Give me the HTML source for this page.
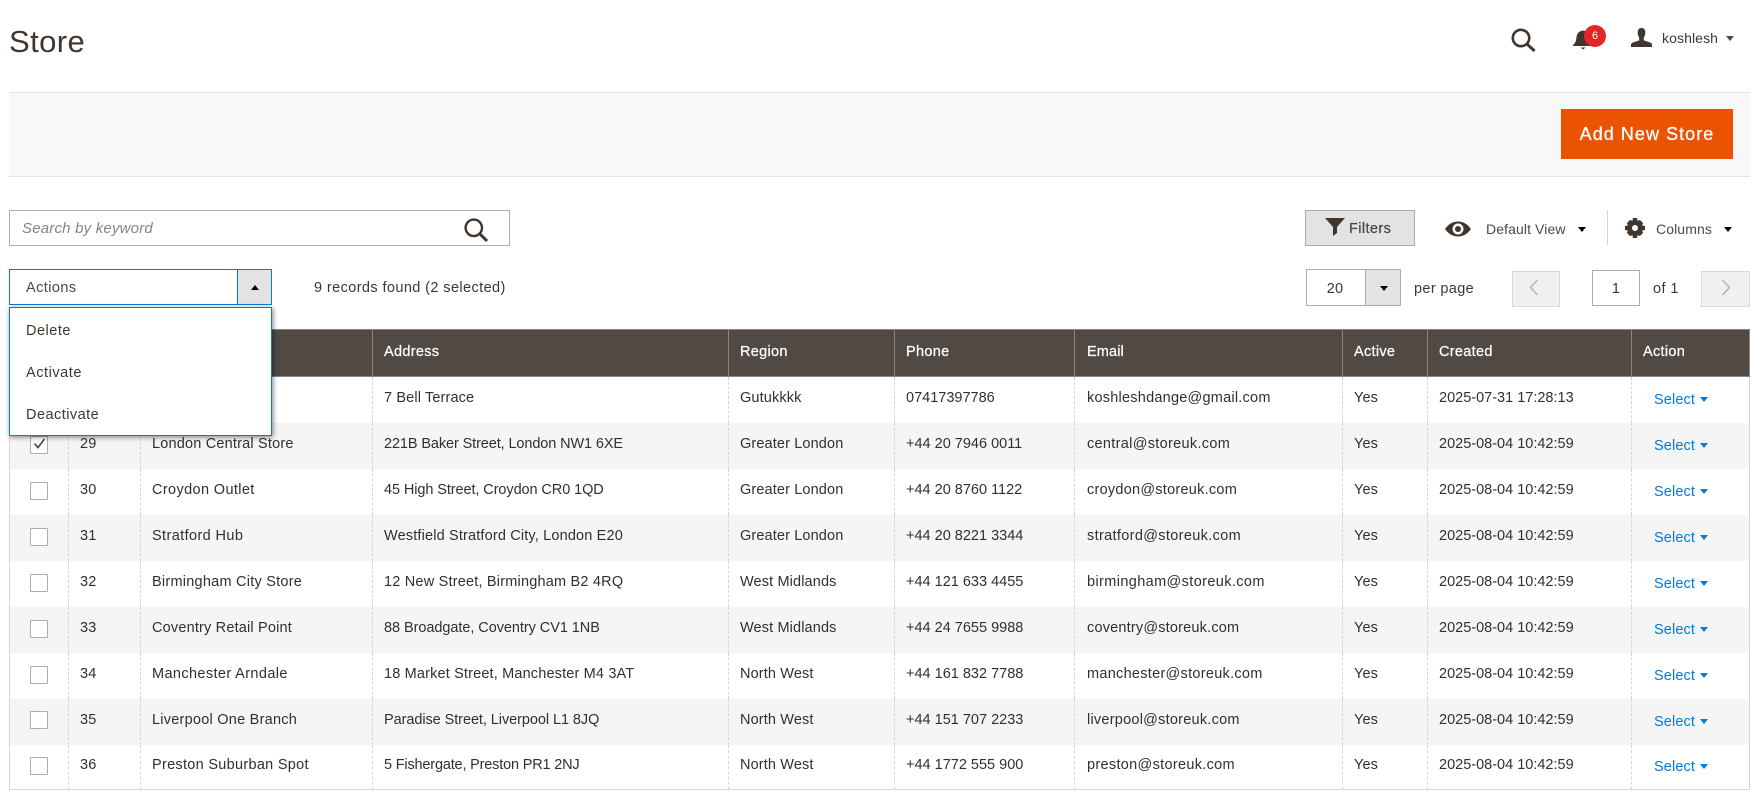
<!DOCTYPE html>
<html><head><meta charset="utf-8"><title>Store</title>
<style>
*{box-sizing:border-box}
html,body{margin:0;padding:0;width:1764px;height:810px;overflow:hidden;background:#fff}
body{font-family:"Liberation Sans",sans-serif;font-size:14.5px;letter-spacing:.13px;color:#303030;position:relative}
.a{position:absolute}
.t{position:absolute;line-height:20px;height:20px;white-space:nowrap}
.d{color:#514943}
.tri{position:absolute;width:0;height:0;border-left:4px solid transparent;border-right:4px solid transparent;border-top:5px solid #41362f}
.triu{position:absolute;width:0;height:0;border-left:4px solid transparent;border-right:4px solid transparent;border-bottom:5px solid #000}
table{position:absolute;left:9px;top:329px;width:1741px;table-layout:fixed;border-collapse:separate;border-spacing:0}
th{height:48px;background:#514943;color:#fff;text-align:left;font-weight:400;letter-spacing:.3px;padding:0 11px 2px;border-right:1px solid #8a837f;border-top:1px solid #8a837f;border-bottom:1px solid #8a837f;-webkit-text-stroke:.25px #fff}
th:first-child{border-left:1px solid #8a837f}
td{height:46px;padding:0 11px 4px;border-right:1px dashed #d6d6d6;white-space:nowrap;overflow:hidden}
td:first-child{border-left:1px solid #d6d6d6}
td:nth-child(3){letter-spacing:.27px}
td:nth-child(6),td:nth-child(9){letter-spacing:0}
td:nth-child(7),th:nth-child(7){padding-left:12px;letter-spacing:.27px}
th:nth-child(7){letter-spacing:.13px}
td:last-child{border-right:1px solid #d6d6d6;padding:0 0 0 22px;color:#007bdb;overflow:visible}
tr:nth-child(even) td{background:#f5f5f5}
tr:last-child td{border-bottom:1px solid #d6d6d6;height:45px}
td i{display:inline-block;width:0;height:0;border-left:4px solid transparent;border-right:4px solid transparent;border-top:5px solid #007bdb;margin-left:5px;vertical-align:2px}
.cb{position:absolute;width:18px;height:18px;left:30px;border:1px solid #adadad;background:#fff;border-radius:1px}
</style></head>
<body>
<div class="t" style="left:9px;top:22px;height:40px;line-height:40px;font-size:31px;letter-spacing:.4px;color:#41362f">Store</div>

<svg class="a" style="left:1511px;top:28px" width="25" height="24" viewBox="0 0 25 24"><circle cx="10" cy="10" r="8.2" fill="none" stroke="#41362f" stroke-width="2.6"/><path d="M15.8 15.8L23.5 23" stroke="#41362f" stroke-width="3" fill="none"/></svg>
<svg class="a" style="left:1572px;top:29px" width="22" height="21" viewBox="0 0 22 21"><path d="M1 16C4 14 4 11 4.500 8C5 4.500 7 2 11 1.500C15 2 17 4.500 17.500 8C18 11 18 14 21 16V17H1Z" fill="#41362f"/><path d="M8.500 18.500H13.500L11 20.500Z" fill="#41362f"/></svg>
<div class="a" style="left:1584px;top:25px;width:22px;height:22px;border-radius:50%;background:#e22626"></div>
<div class="t" style="left:1584px;top:26px;width:22px;text-align:center;color:#fff;font-size:11px;letter-spacing:0">6</div>
<svg class="a" style="left:1631px;top:28px" width="21" height="19" viewBox="0 0 21 19"><path d="M10.500 0C13.500 0 14.500 2.500 14.300 5C14.200 7 13.500 8.500 12.800 9.800V12.200C14.500 13.500 19.500 13.500 21 16V19H0V16C1.500 13.500 6.500 13.500 8.200 12.200V9.800C7.500 8.500 6.800 7 6.700 5C6.500 2.500 7.500 0 10.500 0Z" fill="#41362f"/></svg>
<div class="t d" style="left:1662px;top:28px;font-size:14px;letter-spacing:.1px;color:#41362f">koshlesh</div>
<div class="tri" style="left:1726px;top:36px;border-top-color:#514943"></div>

<div class="a" style="left:9px;top:92px;width:1741px;height:85px;background:#f8f8f8;border-top:1px solid #e3e3e3;border-bottom:1px solid #e3e3e3"></div>
<div class="a" style="left:1561px;top:109px;width:172px;height:50px;background:#eb5202"></div>
<div class="t" style="left:1561px;top:124px;width:172px;text-align:center;color:#fff;font-size:18px;letter-spacing:1.05px;-webkit-text-stroke:.3px #fff">Add New Store</div>

<div class="a" style="left:9px;top:210px;width:501px;height:36px;border:1px solid #adadad;background:#fff"></div>
<div class="t" style="left:22px;top:219px;font-size:15px;letter-spacing:.2px;font-style:italic;color:#858585">Search by keyword</div>
<svg class="a" style="left:464px;top:218px" width="24" height="24" viewBox="0 0 24 24"><circle cx="9.800" cy="9.800" r="8.200" fill="none" stroke="#41362f" stroke-width="2.400"/><path d="M15.500 15.500L23 23" stroke="#41362f" stroke-width="3" fill="none"/></svg>

<div class="a" style="left:1305px;top:210px;width:110px;height:36px;background:#e3e3e3;border:1px solid #adadad"></div>
<svg class="a" style="left:1325px;top:218px" width="20" height="18" viewBox="0 0 20 18"><path d="M0 0H20L12 9V15L8 18V9Z" fill="#41362f"/></svg>
<div class="t" style="left:1349px;top:219px;color:#514943;font-size:14.500px;letter-spacing:.4px;-webkit-text-stroke:.25px #514943">Filters</div>
<svg class="a" style="left:1445px;top:221px" width="26" height="16" viewBox="0 0 26 16"><path fill-rule="evenodd" d="M0 8C3.500 3 8 0.500 13 0.500S22.500 3 26 8C22.500 13 18 15.500 13 15.500S3.500 13 0 8ZM13 2.500A5.500 5.500 0 1 0 13 13.500A5.500 5.500 0 1 0 13 2.500Z" fill="#41362f"/><circle cx="13" cy="8" r="3" fill="#41362f"/></svg>
<div class="t" style="left:1486px;top:219px;color:#514943;font-size:14px;letter-spacing:.1px">Default View</div>
<div class="tri" style="left:1578px;top:227px;border-top-color:#000"></div>
<div class="a" style="left:1607px;top:210px;width:1px;height:35px;background:#d6d6d6"></div>
<svg class="a" style="left:1625px;top:218px" width="20" height="20" viewBox="0 0 20 20"><path fill-rule="evenodd" d="M8 0H12L12.600 2.900L14.900 1.900L18.100 5.100L17.100 7.400L20 8V12L17.100 12.600L18.100 14.900L14.900 18.100L12.600 17.100L12 20H8L7.400 17.100L5.100 18.100L1.900 14.900L2.900 12.600L0 12V8L2.900 7.400L1.900 5.100L5.100 1.900L7.400 2.900ZM10 7A3 3 0 1 0 10 13A3 3 0 1 0 10 7Z" fill="#41362f"/></svg>
<div class="t" style="left:1656px;top:219px;color:#514943;font-size:14px;letter-spacing:.1px">Columns</div>
<div class="tri" style="left:1724px;top:227px;border-top-color:#000"></div>

<div class="a" style="left:1306px;top:269px;width:95px;height:37px;border:1px solid #adadad;background:#fff"></div>
<div class="a" style="left:1365px;top:270px;width:35px;height:35px;background:#e3e3e3;border-left:1px solid #adadad"></div>
<div class="t" style="left:1306px;top:279px;width:58px;text-align:center;color:#41362f">20</div>
<div class="tri" style="left:1380px;top:286px;border-top-color:#000"></div>
<div class="t" style="left:1414px;top:279px;color:#41362f;letter-spacing:.35px">per page</div>
<div class="a" style="left:1512px;top:271px;width:48px;height:36px;background:#f0f0f0;border:1px solid #dadada"></div>
<svg class="a" style="left:1529px;top:279px" width="10" height="18" viewBox="0 0 10 18"><path d="M8.500 1L1.500 8.500L8.500 16" fill="none" stroke="#b5b5b5" stroke-width="1.500"/></svg>
<div class="a" style="left:1592px;top:270px;width:48px;height:36px;background:#fff;border:1px solid #adadad"></div>
<div class="t" style="left:1592px;top:279px;width:48px;text-align:center;color:#41362f">1</div>
<div class="t" style="left:1653px;top:279px;color:#41362f;letter-spacing:.4px">of 1</div>
<div class="a" style="left:1701px;top:271px;width:49px;height:36px;background:#f0f0f0;border:1px solid #dadada"></div>
<svg class="a" style="left:1721px;top:279px" width="10" height="18" viewBox="0 0 10 18"><path d="M1.500 1L8.500 8.500L1.500 16" fill="none" stroke="#b5b5b5" stroke-width="1.500"/></svg>

<div class="t" style="left:314px;top:278px;color:#41362f;letter-spacing:.4px">9 records found (2 selected)</div>

<table>
<colgroup><col style="width:60px"><col style="width:72px"><col style="width:232px"><col style="width:356px"><col style="width:166px"><col style="width:180px"><col style="width:268px"><col style="width:85px"><col style="width:204px"><col style="width:118px"></colgroup>
<thead><tr><th></th><th></th><th></th><th>Address</th><th>Region</th><th>Phone</th><th>Email</th><th>Active</th><th>Created</th><th>Action</th></tr></thead>
<tbody>
<tr><td></td><td></td><td></td><td>7 Bell Terrace</td><td>Gutukkkk</td><td>07417397786</td><td style="letter-spacing:.23px">koshleshdange@gmail.com</td><td>Yes</td><td>2025-07-31 17:28:13</td><td>Select<i></i></td></tr>
<tr><td></td><td>29</td><td style="letter-spacing:.19px">London Central Store</td><td style="letter-spacing:-.11px">221B Baker Street, London NW1 6XE</td><td>Greater London</td><td>+44 20 7946 0011</td><td style="letter-spacing:.31px">central@storeuk.com</td><td>Yes</td><td>2025-08-04 10:42:59</td><td>Select<i></i></td></tr>
<tr><td></td><td>30</td><td style="letter-spacing:.37px">Croydon Outlet</td><td style="letter-spacing:-.09px">45 High Street, Croydon CR0 1QD</td><td>Greater London</td><td>+44 20 8760 1122</td><td style="letter-spacing:.25px">croydon@storeuk.com</td><td>Yes</td><td>2025-08-04 10:42:59</td><td>Select<i></i></td></tr>
<tr><td></td><td>31</td><td style="letter-spacing:.39px">Stratford Hub</td><td style="letter-spacing:.16px">Westfield Stratford City, London E20</td><td>Greater London</td><td>+44 20 8221 3344</td><td style="letter-spacing:.34px">stratford@storeuk.com</td><td>Yes</td><td>2025-08-04 10:42:59</td><td>Select<i></i></td></tr>
<tr><td></td><td>32</td><td style="letter-spacing:.24px">Birmingham City Store</td><td style="letter-spacing:.2px">12 New Street, Birmingham B2 4RQ</td><td>West Midlands</td><td>+44 121 633 4455</td><td style="letter-spacing:.38px">birmingham@storeuk.com</td><td>Yes</td><td>2025-08-04 10:42:59</td><td>Select<i></i></td></tr>
<tr><td></td><td>33</td><td style="letter-spacing:.18px">Coventry Retail Point</td><td style="letter-spacing:-.06px">88 Broadgate, Coventry CV1 1NB</td><td>West Midlands</td><td>+44 24 7655 9988</td><td style="letter-spacing:.19px">coventry@storeuk.com</td><td>Yes</td><td>2025-08-04 10:42:59</td><td>Select<i></i></td></tr>
<tr><td></td><td>34</td><td style="letter-spacing:.38px">Manchester Arndale</td><td style="letter-spacing:.16px">18 Market Street, Manchester M4 3AT</td><td>North West</td><td>+44 161 832 7788</td><td style="letter-spacing:.28px">manchester@storeuk.com</td><td>Yes</td><td>2025-08-04 10:42:59</td><td>Select<i></i></td></tr>
<tr><td></td><td>35</td><td style="letter-spacing:.24px">Liverpool One Branch</td><td style="letter-spacing:-.07px">Paradise Street, Liverpool L1 8JQ</td><td>North West</td><td>+44 151 707 2233</td><td style="letter-spacing:.24px">liverpool@storeuk.com</td><td>Yes</td><td>2025-08-04 10:42:59</td><td>Select<i></i></td></tr>
<tr><td></td><td>36</td><td style="letter-spacing:.29px">Preston Suburban Spot</td><td style="letter-spacing:-.18px">5 Fishergate, Preston PR1 2NJ</td><td>North West</td><td>+44 1772 555 900</td><td style="letter-spacing:.31px">preston@storeuk.com</td><td>Yes</td><td>2025-08-04 10:42:59</td><td>Select<i></i></td></tr>
</tbody></table>

<div class="cb" style="top:436px"><svg style="position:absolute;left:1px;top:0" width="15" height="14" viewBox="0 0 15 14"><path d="M2.500 6.500L6 10.500L12.500 2" fill="none" stroke="#514943" stroke-width="1.700"/></svg></div>
<div class="cb" style="top:482px"></div>
<div class="cb" style="top:528px"></div>
<div class="cb" style="top:574px"></div>
<div class="cb" style="top:620px"></div>
<div class="cb" style="top:666px"></div>
<div class="cb" style="top:711px"></div>
<div class="cb" style="top:757px"></div>

<div class="a" style="left:9px;top:269px;width:263px;height:36px;border:1px solid #007bdb;background:#fff"></div>
<div class="a" style="left:237px;top:270px;width:34px;height:34px;background:#e3e3e3;border-left:1px solid #007bdb"></div>
<div class="t" style="left:26px;top:278px;color:#514943;letter-spacing:.43px">Actions</div>
<div class="triu" style="left:251px;top:285px"></div>

<div class="a" style="left:9px;top:307px;width:263px;height:129px;border:1px solid #007bdb;background:#fff;box-shadow:1px 1px 5px rgba(0,0,0,.5)"></div>
<div class="t" style="left:26px;top:321px;color:#41362f;letter-spacing:.5px">Delete</div>
<div class="t" style="left:26px;top:363px;color:#41362f;letter-spacing:.55px">Activate</div>
<div class="t" style="left:26px;top:405px;color:#41362f;letter-spacing:.47px">Deactivate</div>
</body></html>
